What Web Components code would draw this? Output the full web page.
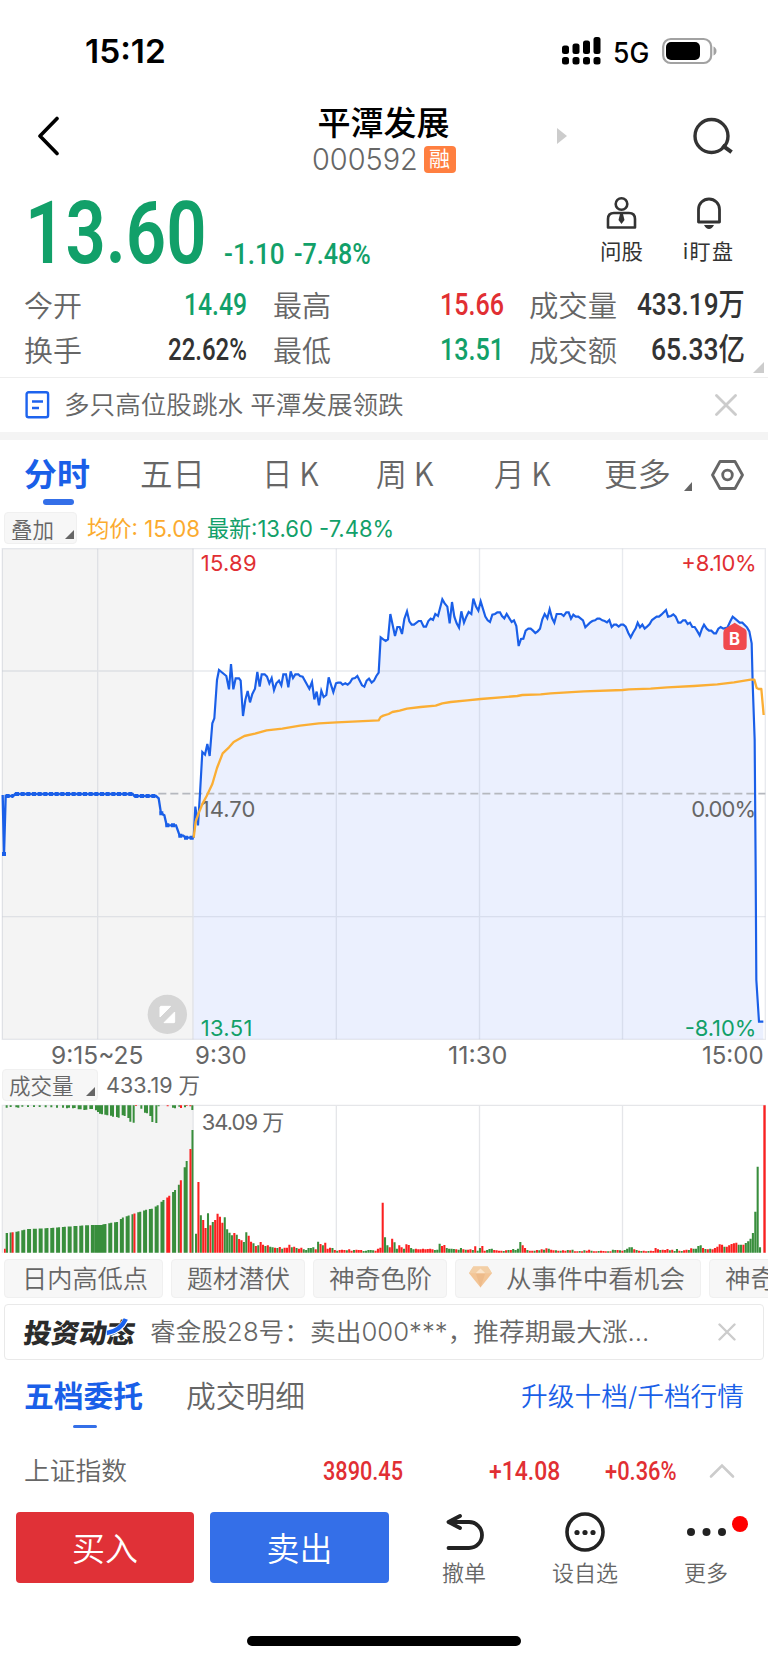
<!DOCTYPE html>
<html lang="zh-CN">
<head>
<meta charset="utf-8">
<title>平潭发展 000592</title>
<style>
body {
  margin: 0;
  background: #fff;
  font-family: Inter, "Noto Sans CJK SC", sans-serif;
}
</style>
</head>
<body>
<stock-page></stock-page>

<script>
function makeTemplate(html) {
  const t = document.createElement('template');
  t.innerHTML = html;
  return t;
}

class BaseElement extends HTMLElement {
  constructor() {
    super();
    this.attachShadow({mode: 'open'});
    this.shadowRoot.appendChild(this.constructor.template.content.cloneNode(true));
  }
}

/* text squeezed or stretched to the width given in "w" */
class FitText extends BaseElement {
  static template = makeTemplate(`
<style>
:host { display: block; flex: none; }
span { display: block; width: max-content; white-space: pre; transform-origin: 0 50%; }
</style>
<span><slot></slot></span>`);

  connectedCallback() {
    const w = parseFloat(this.getAttribute('w'));
    const span = this.shadowRoot.querySelector('span');
    this.style.width = w + 'px';
    span.style.transform = 'scaleX(' + w / span.offsetWidth + ')';
  }
}

class StatusBar extends BaseElement {
  static template = makeTemplate(`
<style>
:host { display: flex; height: 96px; align-items: center; box-sizing: border-box; padding: 6px 51px 0 85px; color: #000; }
.time { font-size: 33px; font-weight: 600; margin-right: auto; }
.net { font-size: 28px; font-weight: 500; margin: 3px 13px 0 12px; }
svg { flex: none; }
</style>
<fit-text class="time" w="81">15:12</fit-text>
<svg width="40" height="30" viewBox="0 0 40 30">
  <g fill="#000">
    <rect x="1" y="9.500" width="7" height="8.500" rx="2.500"/><rect x="11.500" y="7.500" width="7" height="10.500" rx="2.500"/>
    <rect x="22" y="4.500" width="7" height="13.500" rx="2.500"/><rect x="32.500" y="1" width="7" height="17" rx="2.500"/>
    <rect x="1" y="21" width="7" height="7.500" rx="2.500"/><rect x="11.500" y="21" width="7" height="7.500" rx="2.500"/>
    <rect x="22" y="21" width="7" height="7.500" rx="2.500"/><rect x="32.500" y="21" width="7" height="7.500" rx="2.500"/>
  </g>
</svg>
<fit-text class="net" w="36">5G</fit-text>
<svg width="55" height="28" viewBox="0 0 55 28">
  <rect x="1.200" y="2" width="48" height="24" rx="7.500" fill="none" stroke="#a2a2a2" stroke-width="2.200"/>
  <rect x="4" y="5" width="34" height="18" rx="5" fill="#000"/>
  <path d="M51.500 9.500Q54.500 11 54.500 14T51.500 18.500Z" fill="#a2a2a2"/>
</svg>`);
}

class StockNav extends BaseElement {
  static template = makeTemplate(`
<style>
:host { display: grid; grid-template-columns: 312px 143px 1fr auto; height: 84px; align-items: center; box-sizing: border-box; padding-right: 33px; }
.back { margin: 0 0 5px 36px; }
.mid { display: flex; flex-direction: column; align-items: center; margin-top: 5px; }
.name { font-size: 33px; font-weight: 500; line-height: 37px; color: #000; }
.code { display: flex; align-items: center; gap: 6px; height: 34px; }
.num { font-size: 30px; font-weight: 300; color: #666; line-height: 34px; }
.tag { width: 32px; height: 27px; border-radius: 4px; background: #ff7f40; color: #fff; font-size: 21px; line-height: 26px; text-align: center; }
.next { margin: 0 0 5px 102px; }
.find { margin-bottom: 3px; }
</style>
<svg class="back" width="24" height="40" viewBox="0 0 24 40"><path d="M21 2.500 4 20 21 37.500" fill="none" stroke="#000" stroke-width="3.600" stroke-linecap="round" stroke-linejoin="round"/></svg>
<div class="mid">
  <fit-text class="name" w="132">平潭发展</fit-text>
  <div class="code"><fit-text class="num" w="106">000592</fit-text><span class="tag">融</span></div>
</div>
<svg class="next" width="10" height="16"><path d="M0 0 10 8 0 16Z" fill="#ccc"/></svg>
<svg class="find" width="43" height="40" viewBox="0 0 43 40"><circle cx="19.500" cy="19" r="16.500" fill="none" stroke="#333" stroke-width="3.400"/><path d="M32 29.500 38 34" stroke="#333" stroke-width="4" stroke-linecap="square"/></svg>`);
}

class StockQuote extends BaseElement {
  static template = makeTemplate(`
<style>
:host { display: block; height: 197px; position: relative; font-family: Roboto, "Noto Sans CJK SC", sans-serif; }
.top { display: flex; height: 98px; color: #12a069; }
.price { font-size: 87px; font-weight: 600; line-height: 107px; margin-left: 25px; }
.chg { font-size: 30px; font-weight: 500; line-height: 34px; margin: 57px 0 0 17px; }
.pct { margin-left: 9px; }
.tools { display: flex; margin-left: auto; color: #333; font-family: Inter, "Noto Sans CJK SC", sans-serif; padding: 16px 33px 0 0; gap: 40px; }
.tools div { display: flex; flex-direction: column; align-items: center; font-size: 21px; line-height: 26px; gap: 9px; }
.stats { display: grid; grid-template-columns: 58px 165px 26px 58px 173px 25px 89px 127px; padding-left: 24px; font-size: 29px; line-height: 45px; height: 90px; margin-top: 4px; }
.k { color: #666; font-family: "Noto Sans CJK SC", sans-serif; font-weight: 350; }
.v { justify-self: end; font-size: 31px; font-weight: 500; color: #333; }
.g { color: #12a069; }
.r { color: #e12f33; }
.corner { position: absolute; right: 4px; bottom: 4px; }
</style>
<div class="top">
  <fit-text class="price" w="182">13.60</fit-text>
  <fit-text class="chg" w="61">-1.10</fit-text>
  <fit-text class="chg pct" w="77">-7.48%</fit-text>
  <div class="tools">
    <div>
      <svg width="32" height="34" viewBox="0 0 32 34" fill="none" stroke="#333" stroke-width="2.600"><circle cx="15.500" cy="8" r="5.800"/><path d="M2 31.500V23q0-6 6-6h15q6 0 6 6v8.500z" stroke-linejoin="round"/><path d="M14 18h3l1.500 6-3 4-3-4z" fill="#333" stroke="none"/></svg>
      <fit-text w="43">问股</fit-text>
    </div>
    <div>
      <svg width="32" height="34" viewBox="0 0 32 34" fill="none" stroke="#333" stroke-width="2.800"><path d="M5.500 26V13.500a10.500 10.500 0 0 1 21 0v12.500z" stroke-linejoin="round"/><path d="M11 29h10q-2 4-5 4t-5-4z" fill="#333" stroke="none"/></svg>
      <fit-text w="52" style="letter-spacing:1.500px">i盯盘</fit-text>
    </div>
  </div>
</div>
<div class="stats">
  <fit-text class="k" w="58">今开</fit-text><fit-text class="v g" w="63">14.49</fit-text><i></i>
  <fit-text class="k" w="58">最高</fit-text><fit-text class="v r" w="64">15.66</fit-text><i></i>
  <fit-text class="k" w="88">成交量</fit-text><fit-text class="v" w="108">433.19万</fit-text>
  <fit-text class="k" w="58">换手</fit-text><fit-text class="v" w="79">22.62%</fit-text><i></i>
  <fit-text class="k" w="58">最低</fit-text><fit-text class="v g" w="64">13.51</fit-text><i></i>
  <fit-text class="k" w="88">成交额</fit-text><fit-text class="v" w="94">65.33亿</fit-text>
</div>
<svg class="corner" width="11" height="11"><path d="M11 0V11H0Z" fill="#ccc"/></svg>`);
}

class NewsStrip extends BaseElement {
  static template = makeTemplate(`
<style>
:host { display: flex; align-items: center; height: 63px; box-sizing: border-box; border-top: 1px solid #eee; border-bottom: 8px solid #f4f4f4; padding: 0 31px 0 25px; }
.t { font-size: 25.500px; font-weight: 350; color: #666; margin: 0 auto 0 14px; line-height: 54px; }
</style>
<svg width="25" height="28" viewBox="0 0 25 28" fill="none" stroke="#1d63ee" stroke-width="2.400"><rect x="1.600" y="1.200" width="21.500" height="25" rx="2"/><path d="M7 10.500h11M7 17h7"/></svg>
<fit-text class="t" w="340"><slot></slot></fit-text>
<svg width="22" height="22" viewBox="0 0 22 22"><path d="M1.500 1.500l19 19m0-19l-19 19" stroke="#ccc" stroke-width="2.800" stroke-linecap="round"/></svg>`);
}

class PeriodTabs extends BaseElement {
  static template = makeTemplate(`
<style>
:host { display: flex; height: 70px; align-items: flex-start; padding-left: 24px; font-size: 32px; line-height: 65px; font-weight: 350; color: #666; font-family: "Noto Sans CJK SC", sans-serif; }
.on { color: #1a5fe8; font-weight: 700; position: relative; }
.on::after { content: ""; position: absolute; left: 19px; top: 59px; width: 31px; height: 6px; border-radius: 3px; background: #346fe8; }
svg { flex: none; }
.tri { margin: 42px 19px 0 13px; }
.hex { margin-top: 19px; }
</style>
<fit-text class="on" w="66">分时</fit-text>
<fit-text w="65" style="margin-left:50px">五日</fit-text>
<fit-text w="57" style="margin-left:57px">日 K</fit-text>
<fit-text w="58" style="margin-left:57px">周 K</fit-text>
<fit-text w="57" style="margin-left:60px">月 K</fit-text>
<fit-text w="67" style="margin-left:53px">更多</fit-text>
<svg class="tri" width="8" height="9"><path d="M8 0V9H0Z" fill="#666"/></svg>
<svg class="hex" width="33" height="32" viewBox="0 0 33 32" fill="none" stroke="#666" stroke-width="2.800"><path d="M9 2.500h15L31.500 16 24 29.500H9L1.500 16z" stroke-linejoin="round"/><circle cx="16.500" cy="16" r="4.800"/></svg>`);
}

/* small grey button with a corner triangle, as used over both charts */
class DropButton extends BaseElement {
  static template = makeTemplate(`
<style>
:host { display: flex; align-items: center; box-sizing: border-box; height: 32px; border: 1px solid #f0f0f0; border-radius: 4px; background: #f7f7f7; color: #666; font-size: 21.500px; font-weight: 350; padding-left: 6px; flex: none; font-family: "Noto Sans CJK SC", sans-serif; }
slot { display: block; }
svg { margin: 12px 2px 0 auto; }
</style>
<slot></slot>
<svg width="9" height="9"><path d="M9 0V9H0Z" fill="#666"/></svg>`);
}

class PriceChart extends BaseElement {
  static template = makeTemplate(`
<style>
:host { display: block; }
.head { display: flex; height: 36px; align-items: center; padding-left: 4px; font-size: 22.500px; line-height: 37px; box-sizing: border-box; }
drop-button { width: 73px; }
.avg { color: #fbab2f; margin-left: 10px; }
.last { color: #12a069; margin-left: 7px; }
svg { display: block; }
text { font-size: 66px; }
.axis { display: flex; height: 26px; line-height: 27px; font-size: 24px; color: #666; }
</style>
<div class="head">
  <drop-button><fit-text w="43">叠加</fit-text></drop-button>
  <fit-text class="avg" w="113">均价: 15.08</fit-text>
  <fit-text class="last" w="187">最新:13.60 -7.48%</fit-text>
</div>
<svg width="768" height="496" viewBox="0 18 2304 1488">
  <rect x="6" y="26" width="575" height="1472" fill="#f4f4f4"/>
  <path id="area" fill="#ebf0fe"/>
  <g fill="none" stroke="#98a0b0" stroke-opacity=".22" stroke-width="4">
    <path d="M7 26H2296V1498H7Z"/>
    <path d="M293 26V1498M579 26V1498M1009 26V1498M1438.500 26V1498M1867.500 26V1498M7 393H2296M7 1130H2296"/>
  </g>
  <path d="M475 761H2296" stroke="#b5b8be" stroke-width="5" stroke-dasharray="24 12"/>
  <g fill="#666"><text x="602" y="830" textLength="164">14.70</text><text x="2074" y="830" textLength="194">0.00%</text></g>
  <g fill="#e12f33"><text x="602" y="92" textLength="168">15.89</text><text x="2044" y="92" textLength="226">+8.10%</text></g>
  <g fill="#12a069"><text x="602" y="1489" textLength="155">13.51</text><text x="2054" y="1489" textLength="215">-8.10%</text></g>
  <path id="pre" fill="none" stroke="#1a5fe8" stroke-width="7"/>
  <path id="dots" fill="none" stroke="#1a5fe8" stroke-width="12" stroke-dasharray="12 5"/>
  <path id="price" fill="none" stroke="#1a5fe8" stroke-width="6.500"/>
  <path id="mean" fill="none" stroke="#fbae34" stroke-width="7" stroke-linejoin="round"/>
  <path d="M2178 264 2204 248 2230 264Q2240 268 2240 278V318Q2240 330 2228 330H2182Q2170 330 2170 318V278Q2170 268 2178 264Z" fill="#f04a4e"/>
  <text x="2187" y="316" style="font-size:50px;font-weight:700" fill="#fff">B</text>
  <circle cx="502" cy="1423" r="59" fill="#d5d5d5"/>
  <path d="M482 1399H512L480 1431V1401ZM524 1416V1446Q524 1448 522 1448H492Z" fill="#fff" stroke="#fff" stroke-width="3" stroke-linejoin="round"/>
</svg>
<div class="axis">
  <fit-text w="92" style="margin-left:51px">9:15~25</fit-text>
  <fit-text w="52" style="margin-left:52px">9:30</fit-text>
  <fit-text w="59" style="margin-left:201px">11:30</fit-text>
  <fit-text w="62" style="margin-left:195px">15:00</fit-text>
</div>`);

  connectedCallback() {
    const root = this.shadowRoot;
    //call auction before 9:30
    const pre = '8,765 12,942 17,768 40,768 45,762 398,762 403,768 468,768 476,775 483,820 493,826 500,856 528,856 539,887 550,887 556,893 581,893';
    const am = '581,893 586,800 594,856 600,760 607,636 615,644 622,612 629,648 637,550 643,535 651,420 657,390 679,408 687,448 693,372 700,448 707,415 717,415 722,422 729,528 736,480 743,453 750,487 757,462 765,446 772,396 779,440 785,403 794,403 801,410 808,430 815,414 822,450 829,430 837,422 844,436 850,403 858,403 865,442 872,394 879,414 886,403 895,403 900,408 908,410 928,446 936,426 943,478 950,455 957,496 964,452 971,471 979,465 986,412 1000,456 1008,430 1014,428 1022,428 1028,434 1036,430 1043,434 1050,428 1057,416 1065,414 1072,408 1086,436 1093,440 1100,422 1107,416 1115,428 1122,422 1129,408 1136,398 1142,292 1150,298';
    //second part, x counted from the middle of the chart
    const pm = '5,303 12,298 19,222 33,288 40,261 47,261 54,282 61,237 69,214 76,244 83,254 90,254 104,243 111,243 119,260 126,260 133,243 140,236 147,240 154,222 162,228 175,178 182,190 190,200 197,250 204,186 211,230 218,250 225,263 232,214 240,248 247,230 254,216 262,222 268,176 276,200 283,212 290,184 304,230 311,241 318,246 325,224 333,222 340,217 348,217 354,228 361,235 368,222 383,246 390,241 397,258 404,318 411,297 418,296 425,272 433,266 440,266 447,272 454,279 461,274 468,266 475,238 482,222 490,235 497,208 504,234 511,248 518,222 532,222 539,228 547,217 554,217 561,236 568,224 575,230 583,230 597,241 604,262 618,248 625,243 633,241 640,236 647,236 655,241 662,243 669,247 676,240 683,261 690,254 697,254 704,260 711,254 718,254 725,260 733,279 740,292 747,278 755,265 761,248 768,262 775,254 782,266 789,260 797,252 804,240 818,230 825,230 832,224 846,210 852,230 861,228 868,223 875,230 883,248 890,248 897,241 904,241 911,252 918,248 925,261 932,261 939,272 947,286 954,266 960,254 968,266 975,272 982,272 990,280 996,280 1003,266 1010,261 1018,266 1030,263 1039,244 1046,230 1053,236 1067,248 1075,248 1089,262 1096,274 1103,310 1106,430 1112,600 1115,990 1117,1320 1125,1445 1138,1445';
    const meanAm = '581,893 587,845 595,822 608,790 620,768 637,732 651,684 668,640 687,622 701,606 733,588 765,581 800,571 847,566 900,557 957,550 1010,547 1136,541 1142,531 1150,527';
    const meanPm = '14,522 25,516 47,512 69,506 110,501 155,497 175,490 200,486 250,481 290,477 400,468 415,465 470,463 500,460 600,454 716,450 735,448 800,446 850,442 930,438 1000,433 1050,427 1100,419 1111,419 1118,444 1124,447 1132,447 1139,525';
    const shift = s => s.split(' ').map(p => {
      const [x, y] = p.split(',');
      return (+x + 1152) + ',' + y;
    }).join(' ');
    const line = am + ' ' + shift(pm);
    root.querySelector('#pre').setAttribute('d', 'M' + pre);
    root.querySelector('#dots').setAttribute('d', 'M12,936V948M17,768H40M45,762H398M403,768H468M478,820H494M496,856H528M535,887H551M552,893H581');
    root.querySelector('#price').setAttribute('d', 'M' + line);
    root.querySelector('#area').setAttribute('d', 'M' + line + ' V1498H581Z');
    root.querySelector('#mean').setAttribute('d', 'M' + meanAm + ' ' + shift(meanPm));
  }
}

class VolumeChart extends BaseElement {
  static template = makeTemplate(`
<style>
:host { display: block; }
.head { display: flex; height: 36px; align-items: center; padding: 0 0 2px 2px; box-sizing: border-box; font-size: 22px; color: #666; line-height: 34px; }
drop-button { width: 96px; --tri: 5px; }
.sum { margin-left: 8px; }
svg { display: block; }
text { font-size: 66px; fill: #666; }
</style>
<div class="head">
  <drop-button><fit-text w="65">成交量</fit-text></drop-button>
  <fit-text class="sum" w="94">433.19 万</fit-text>
</div>
<svg width="768" height="150" viewBox="0 372 2304 450">
  <rect x="6" y="376" width="575" height="442" fill="#f4f4f4"/>
  <path d="M7 818V376H2296V818M293 376V818M579 376V818M1009 376V818M1438.500 376V818M1867.500 376V818" fill="none" stroke="#e5e6e9" stroke-width="4"/>
  <path id="g" fill="#388e3c"/>
  <path id="r" fill="#fb2020"/>
  <text x="605" y="449" textLength="248">34.09 万</text>
</svg>`);

  connectedCallback() {
    const d = {g: '', r: ''};
    const bar = (c, x, w, y, h) => { d[c] += `M${x} ${y}h${w}v${h}h${-w}z`; };

    //matched volume of the auction
    const env = [[17, 759], [50, 755], [66, 751], [85, 747], [150, 744], [200, 740], [270, 735], [300, 735], [330, 729], [356, 725], [366, 713], [400, 702], [415, 697], [440, 689], [460, 685], [475, 674], [490, 660], [505, 650], [525, 630], [540, 610], [556, 555], [571, 511], [577, 450]];
    const top = x => {
      for (let i = 1; i < env.length; i++) {
        if (x <= env[i][0]) {
          const [x0, y0] = env[i - 1], [x1, y1] = env[i];
          return y0 + (y1 - y0) * (x - x0) / (x1 - x0);
        }
      }
      return 450;
    };
    bar('r', 12, 5, 806, 12);
    bar('g', 17, 7, 759, 59);
    bar('g', 285, 23, 735, 83);
    const red = [35, 402, 500, 506, 540, 568];
    for (let i = 0; i < 32; i++) {
      const x = 29 + i * 17.4;
      if (x > 290 && x < 300) continue;
      [x, x + 6].forEach(b => {
        const c = red.some(v => Math.abs(v - b) < 3) ? 'r' : 'g';
        const t = Math.max(450, top(b + 3));
        bar(c, b, 6, t, 818 - t);
      });
    }

    //unmatched volume, hanging from the top
    const hang = [[17, 7], [29, 5], [46, 6], [52, 7], [64, 4], [81, 5], [99, 5], [116, 5], [134, 6], [151, 6], [168, 7], [186, 7], [198, 9], [204, 7], [216, 9], [221, 8], [233, 12], [239, 12], [250, 14], [256, 13], [268, 11], [273, 11], [285, 15], [291, 20], [297, 25], [303, 27], [313, 28], [319, 30], [330, 31], [336, 34], [348, 35], [353, 37], [365, 30], [371, 32], [382, 38], [388, 49], [398, 52], [421, 10], [432, 22], [438, 24], [448, 32], [454, 50], [466, 53], [473, 3], [516, 7], [522, 9], [535, 4], [552, 6], [574, 14]];
    hang.forEach(([x, h]) => bar('g', x, 6, 376, h));
    [[405, 2], [500, 3], [540, 8], [557, 2], [568, 3]].forEach(([x, h]) => bar('r', x, 6, 376, h));

    //one bar for each minute from 9:30
    const minutes = ('g57 r212 g112 r98 r74 g118 r82 g92 r98 r117 r108 r90 g106 g70 g60 g52 r59 g54 r41 r37 g32 g61 r51 r33 g28 r20 g22 r32 r24 g20 r22 g18 g16 r15 g14 r17 g12 r15 r15 r24 g16 r18 g14 r12 r15 g10 g8 g14 g14 g16 r10 g33 r26 g22 r30 r12 r15 g14 r8 g6 r8 ' +
      'r9 r8 g7 r10 r6 g8 r9 r8 r8 g5 g6 g8 g8 g7 r6 r12 r15 r150 ' +
      'g46 g22 r16 r42 g31 g12 r22 r16 g12 r25 r23 g14 g10 r12 r10 r10 r12 r10 r11 r12 r10 g8 g9 g27 r20 r23 g14 g12 g12 g11 r10 g9 g14 r10 g9 r9 r10 g8 r19 g6 g14 r20 r6 g8 g11 g12 r8 r7 r6 r6 g5 r7 g8 r8 g11 g8 g12 ' +
      'g32 r22 r14 g8 r6 r6 g6 r8 g7 r10 g9 r13 g12 r9 r7 g7 r6 g6 r7 r6 g8 r7 g9 r4 r4 g5 r4 g7 r6 r9 g6 r4 r4 g5 r6 r5 r4 g4 r4 g9 g8 r8 g7 r6 g8 ' +
      'g12 g16 g16 r10 g8 r6 g5 r6 r4 g5 r6 r5 r14 r10 g8 r9 r8 r11 g7 r9 g5 g11 r6 g5 r7 r9 g8 r13 g12 g12 g20 g22 r14 g11 r10 g12 r10 r14 r18 r25 r24 g18 r18 r22 r26 r28 r30 g24 g24 r24 g29 g34 g42 g59 g123 g258 g16').split(' ');
    const step = (2277 - 1152) / (minutes.length - 80);
    minutes.forEach((m, i) => {
      const h = +m.slice(1);
      const x = i < 79 ? 585 + i * 7.18 : 1152 + (i - 79) * step;
      bar(m[0], x.toFixed(1), 6.2, 818 - h, h);
    });
    bar('r', 2290, 7, 376, 442);

    this.shadowRoot.querySelector('#g').setAttribute('d', d.g);
    this.shadowRoot.querySelector('#r').setAttribute('d', d.r);
  }
}

class ToolChip extends BaseElement {
  static template = makeTemplate(`
<style>
:host { display: flex; align-items: center; flex: none; box-sizing: border-box; height: 39px; padding: 0 15px 0 18px; border: 1px solid #f0f0f0; border-radius: 4px; background: #f7f7f7; color: #666; font-size: 25px; font-weight: 350; line-height: 36px; }
</style>
<slot></slot>`);
}

class ToolChips extends BaseElement {
  static template = makeTemplate(`
<style>
:host { display: flex; gap: 8px; height: 50px; padding: 5px 0 0 4px; box-sizing: border-box; overflow: hidden; }
svg { margin: -3px 14px 0 -5px; }
</style>
<tool-chip style="width:159px;padding-left:17px"><fit-text w="126">日内高低点</fit-text></tool-chip>
<tool-chip style="width:134px;padding-left:15px"><fit-text w="103">题材潜伏</fit-text></tool-chip>
<tool-chip style="width:134px;padding-left:15px"><fit-text w="103">神奇色阶</fit-text></tool-chip>
<tool-chip style="width:246px">
  <svg width="24" height="22" viewBox="0 0 24 22"><path d="M4.500 0h15L24 7 12 22 0 7z" fill="#f3c596"/><path d="M4.500 0h15L24 7H0z" fill="#f3cfa6"/><path d="M7 7h10l-5 15z" fill="#eebb8a"/><path d="M7 7l5-5 5 5z" fill="#fbe5cb"/></svg>
  <fit-text w="179">从事件中看机会</fit-text>
</tool-chip>
<tool-chip style="width:134px;padding-left:15px"><fit-text w="51">神奇</fit-text></tool-chip>`);
}

class TipBanner extends BaseElement {
  static template = makeTemplate(`
<style>
:host { display: flex; align-items: center; box-sizing: border-box; height: 56px; margin: 0 4px; border: 1.500px solid #e9e9e9; border-radius: 4px; padding: 0 27px 0 19px; }
.logo { position: relative; font: 900 27px/52px "Noto Sans CJK SC", sans-serif; color: #2b2b2b; transform: skewX(-8deg); }
.logo svg { position: absolute; left: 82px; top: 12px; }
.msg { font-size: 25.500px; font-weight: 350; color: #666; margin: 0 auto 0 15px; line-height: 52px; }
</style>
<div class="logo"><fit-text w="111">投资动态</fit-text><svg width="22" height="20" viewBox="0 0 22 20" fill="none"><path d="M18 2Q14 13 2 15" stroke="#fff" stroke-width="6.500"/><path d="M18 1Q14 13 1 15" stroke="#1a62f0" stroke-width="4.600"/></svg></div>
<fit-text class="msg" w="499"><slot></slot></fit-text>
<svg width="18" height="18" viewBox="0 0 18 18"><path d="M1.500 1.500l15 15m0-15l-15 15" stroke="#ccc" stroke-width="2.400" stroke-linecap="round"/></svg>`);
}

class OrderTabs extends BaseElement {
  static template = makeTemplate(`
<style>
:host { display: flex; height: 76px; line-height: 72px; padding: 0 24px; font-size: 29.500px; font-weight: 350; color: #666; }
.on { color: #1a5fe8; font-weight: 700; position: relative; margin-right: 43px; }
.on::after { content: ""; position: absolute; left: 49px; top: 65px; width: 24px; height: 3px; border-radius: 2px; background: #346fe8; }
.more { color: #1a5fe8; margin-left: auto; font-size: 26px; line-height: 73px; }
</style>
<fit-text class="on" w="119">五档委托</fit-text>
<fit-text w="119">成交明细</fit-text>
<fit-text class="more" w="223">升级十档/千档行情</fit-text>`);
}

class IndexRow extends BaseElement {
  static template = makeTemplate(`
<style>
:host { display: flex; align-items: center; height: 70px; padding: 0 33px 0 24px; font: 500 25.500px/70px Roboto, "Noto Sans CJK SC", sans-serif; color: #e12f33; }
.name { color: #666; font-weight: 350; }
</style>
<fit-text class="name" w="103">上证指数</fit-text>
<fit-text w="80" style="margin-left:196px">3890.45</fit-text>
<fit-text w="71" style="margin-left:86px">+14.08</fit-text>
<fit-text w="72" style="margin-left:45px">+0.36%</fit-text>
<svg width="26" height="16" viewBox="0 0 26 16" style="margin-left:auto"><path d="M2 13.500 13 2.500 24 13.500" fill="none" stroke="#ccc" stroke-width="2.600" stroke-linecap="round"/></svg>`);
}

class ActionBar extends BaseElement {
  static template = makeTemplate(`
<style>
:host { display: grid; grid-template-columns: 178px 179px 1fr; column-gap: 16px; padding: 6px 0 0 16px; height: 152px; box-sizing: border-box; }
button { height: 71px; border: 0; border-radius: 4px; background: #e03137; color: #fff; padding: 0; font: 350 33px/71px "Noto Sans CJK SC", sans-serif; display: flex; justify-content: center; }
.sell { background: #346fe8; }
.links { display: flex; color: #666; font-size: 22px; font-weight: 350; line-height: 26px; padding-left: 37px; gap: 66px; }
.links div { display: flex; flex-direction: column; align-items: center; gap: 8px; position: relative; }
.dot { position: absolute; left: 48px; top: 4px; width: 16px; height: 16px; border-radius: 50%; background: #f00; }
</style>
<button><fit-text w="66">买入</fit-text></button>
<button class="sell"><fit-text w="66">卖出</fit-text></button>
<div class="links">
  <div>
    <svg width="44" height="40" viewBox="0 0 44 40" fill="none" stroke="#222" stroke-width="3.800" stroke-linecap="round" stroke-linejoin="round"><path d="M18 4 6.500 10 18 16M7.500 10H27A13 13 0 0 1 27 36H6.500"/></svg>
    <fit-text w="44">撤单</fit-text>
  </div>
  <div>
    <svg width="44" height="40" viewBox="0 0 44 40"><circle cx="22" cy="20" r="18" fill="none" stroke="#222" stroke-width="3.600"/><g fill="#222"><circle cx="14" cy="20.500" r="2.600"/><circle cx="22" cy="20.500" r="2.600"/><circle cx="30" cy="20.500" r="2.600"/></g></svg>
    <fit-text w="66">设自选</fit-text>
  </div>
  <div>
    <svg width="44" height="40" viewBox="0 0 44 40" fill="#222"><circle cx="7" cy="20" r="4"/><circle cx="22.500" cy="20" r="4"/><circle cx="38" cy="20" r="4"/></svg>
    <fit-text w="44">更多</fit-text>
    <span class="dot"></span>
  </div>
</div>`);
}

class HomeBar extends BaseElement {
  static template = makeTemplate(`
<style>
:host { display: block; width: 274px; height: 10px; margin: -22px auto 17px; border-radius: 5px; background: #000; }
</style>`);
}

class StockPage extends BaseElement {
  static template = makeTemplate(`
<style>
:host { display: block; width: 768px; height: 1663px; overflow: hidden; }
</style>
<status-bar></status-bar>
<stock-nav></stock-nav>
<stock-quote></stock-quote>
<news-strip>多只高位股跳水 平潭发展领跌</news-strip>
<period-tabs></period-tabs>
<price-chart></price-chart>
<volume-chart></volume-chart>
<tool-chips></tool-chips>
<tip-banner>睿金股28号：卖出000***，推荐期最大涨...</tip-banner>
<order-tabs></order-tabs>
<index-row></index-row>
<action-bar></action-bar>
<home-bar></home-bar>`);
}

customElements.define('stock-page', StockPage);
customElements.define('status-bar', StatusBar);
customElements.define('stock-nav', StockNav);
customElements.define('stock-quote', StockQuote);
customElements.define('news-strip', NewsStrip);
customElements.define('period-tabs', PeriodTabs);
customElements.define('drop-button', DropButton);
customElements.define('price-chart', PriceChart);
customElements.define('volume-chart', VolumeChart);
customElements.define('tool-chip', ToolChip);
customElements.define('tool-chips', ToolChips);
customElements.define('tip-banner', TipBanner);
customElements.define('order-tabs', OrderTabs);
customElements.define('index-row', IndexRow);
customElements.define('action-bar', ActionBar);
customElements.define('home-bar', HomeBar);
customElements.define('fit-text', FitText);
</script>
</body>
</html>
